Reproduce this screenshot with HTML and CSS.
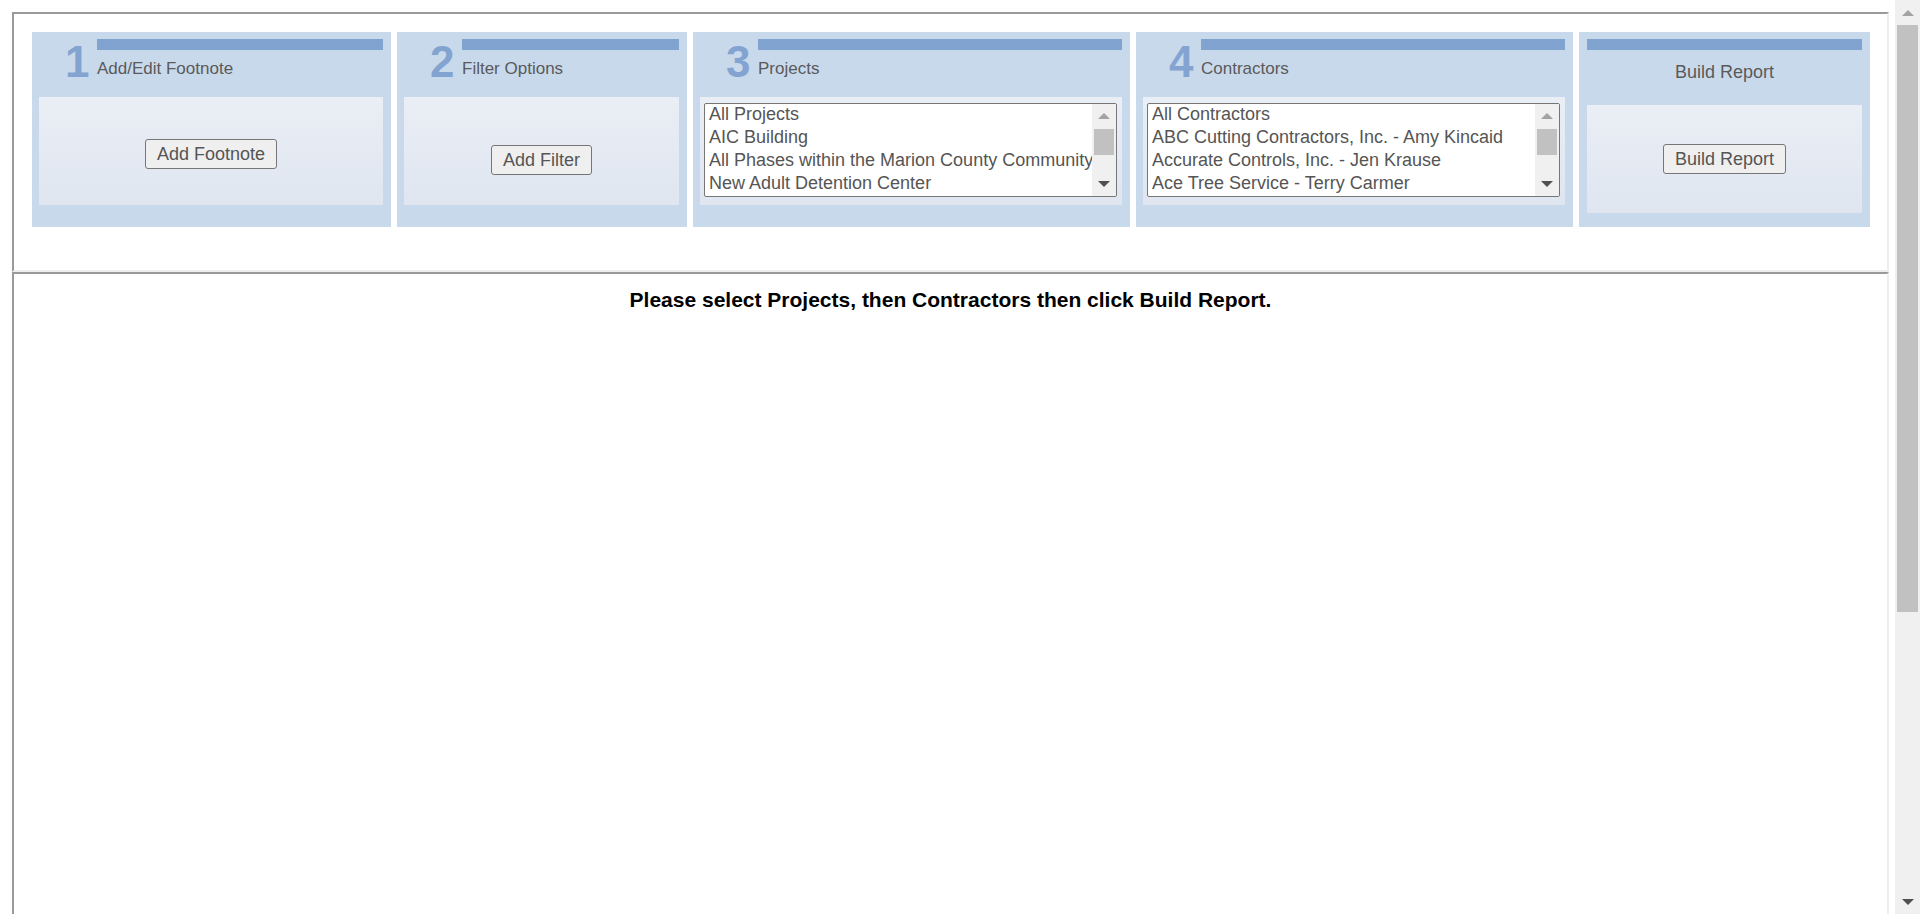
FILE: index.html
```html
<!DOCTYPE html>
<html>
<head>
<meta charset="utf-8">
<title>Report Builder</title>
<link rel="stylesheet" href="styles.css">
</head>
<body>
<div class="page">
  <div class="frame frame-top">
    <div class="steps">
      <div class="panel panel-w1">
        <div class="head">
          <div class="num">1</div>
          <div class="head-right">
            <div class="bar"></div>
            <div class="title">Add/Edit Footnote</div>
          </div>
        </div>
        <div class="well well-btn well-p1"><button class="btn">Add Footnote</button></div>
      </div>
      <div class="panel panel-w2">
        <div class="head">
          <div class="num">2</div>
          <div class="head-right">
            <div class="bar"></div>
            <div class="title">Filter Options</div>
          </div>
        </div>
        <div class="well well-btn well-p2"><button class="btn">Add Filter</button></div>
      </div>
      <div class="panel panel-w3">
        <div class="head">
          <div class="num">3</div>
          <div class="head-right">
            <div class="bar"></div>
            <div class="title">Projects</div>
          </div>
        </div>
        <div class="well well-list">
          <div class="listbox">
            <div class="options">
              <div class="opt">All Projects</div>
              <div class="opt">AIC Building</div>
              <div class="opt">All Phases within the Marion County Community</div>
              <div class="opt">New Adult Detention Center</div>
            </div>
            <div class="vscroll">
              <div class="arrow"><span class="tri-up"></span></div>
              <div class="thumb"></div>
              <div class="spacer"></div>
              <div class="arrow"><span class="tri-down"></span></div>
            </div>
          </div>
        </div>
      </div>
      <div class="panel panel-w3">
        <div class="head">
          <div class="num">4</div>
          <div class="head-right">
            <div class="bar"></div>
            <div class="title">Contractors</div>
          </div>
        </div>
        <div class="well well-list">
          <div class="listbox">
            <div class="options">
              <div class="opt">All Contractors</div>
              <div class="opt">ABC Cutting Contractors, Inc. - Amy Kincaid</div>
              <div class="opt">Accurate Controls, Inc. - Jen Krause</div>
              <div class="opt">Ace Tree Service - Terry Carmer</div>
            </div>
            <div class="vscroll">
              <div class="arrow"><span class="tri-up"></span></div>
              <div class="thumb"></div>
              <div class="spacer"></div>
              <div class="arrow"><span class="tri-down"></span></div>
            </div>
          </div>
        </div>
      </div>
      <div class="panel panel-w5">
        <div class="head-build">
          <div class="bar bar-build"></div>
          <div class="title title-build">Build Report</div>
        </div>
        <div class="well well-btn well-p5 well-build"><button class="btn">Build Report</button></div>
      </div>
    </div>
  </div>
  <div class="frame frame-bottom">
    <div class="message">Please select Projects, then Contractors then click Build Report.</div>
  </div>
</div>
<div class="page-scroll">
  <div class="p-arrow"><span class="p-tri-up"></span></div>
  <div class="p-thumb"></div>
  <div class="spacer"></div>
  <div class="p-arrow"><span class="p-tri-down"></span></div>
</div>
</body>
</html>
```
FILE: styles.css
```css
html, body {
  margin: 0;
  height: 914px;
  overflow: hidden;
  background: #ffffff;
}
body {
  display: flex;
  font-family: "Liberation Sans", Arial, sans-serif;
}
.page {
  flex: 1;
  min-width: 0;
  display: flex;
  flex-direction: column;
  padding: 12px 6px 0 12px;
}
.frame {
  box-sizing: border-box;
  border: 2px solid;
  border-color: #9a9a9a #eeeeee #eeeeee #9a9a9a;
  flex: none;
}
.frame-top {
  height: 260px;
  padding: 18px 0 0 18px;
}
.frame-bottom {
  height: 642px;
  border-bottom-width: 0;
}
.steps {
  display: flex;
  gap: 6px;
}
.panel {
  height: 195px;
  background: #c9d9ec;
  box-sizing: border-box;
  flex: none;
}
.panel-w1 { width: 359px; }
.panel-w2 { width: 290px; }
.panel-w3 { width: 437px; }
.panel-w5 { width: 291px; }
.head {
  height: 65px;
  display: flex;
}
.num {
  width: 65px;
  box-sizing: border-box;
  padding: 8px 0 0 33px;
  font-size: 44px;
  line-height: 44px;
  font-weight: bold;
  color: #83a4d0;
}
.head-right {
  flex: 1;
  padding: 7px 8px 0 0;
}
.bar {
  height: 11px;
  background: #81a3cf;
}
.title {
  margin-top: 9px;
  font-size: 17px;
  line-height: 20px;
  color: #5a5a5a;
  white-space: nowrap;
}
.head-build {
  height: 73px;
  padding-top: 7px;
  box-sizing: border-box;
}
.bar-build {
  margin: 0 8px;
}
.title-build {
  margin-top: 12px;
  font-size: 18px;
  text-align: center;
}
.well {
  height: 108px;
  margin: 0 8px 0 7px;
  box-sizing: border-box;
  background: linear-gradient(#eaeef5, #dfe6f0);
}
.well-build { margin: 0 8px; }
.well-btn { text-align: center; }
.well-p1 { padding-top: 42px; }
.well-p2 { padding-top: 48px; }
.well-p5 { padding-top: 39px; }
.btn {
  font-family: "Liberation Sans", Arial, sans-serif;
  font-size: 18px;
  line-height: 28px;
  height: 30px;
  padding: 0 11px;
  color: #555555;
  background: #efefef;
  border: 1px solid #767676;
  border-radius: 3px;
  margin: 0;
}
.well-list {
  padding: 6px 5px 0 4px;
}
.listbox {
  height: 94px;
  box-sizing: border-box;
  border: 1px solid #767676;
  border-radius: 2px;
  background: #ffffff;
  display: flex;
  overflow: hidden;
}
.options {
  flex: 1;
  min-width: 0;
  overflow: hidden;
  margin-top: -1px;
  padding-left: 4px;
}
.opt {
  font-size: 18px;
  line-height: 23px;
  color: #555555;
  white-space: nowrap;
}
.vscroll {
  width: 24px;
  flex: none;
  background: #f0f0f0;
  display: flex;
  flex-direction: column;
}
.arrow {
  height: 24px;
  display: flex;
  align-items: center;
  justify-content: center;
  flex: none;
}
.tri-up {
  width: 0;
  height: 0;
  border-left: 6px solid transparent;
  border-right: 6px solid transparent;
  border-bottom: 6px solid #a3a3a3;
}
.tri-down {
  width: 0;
  height: 0;
  border-left: 6px solid transparent;
  border-right: 6px solid transparent;
  border-top: 6px solid #505050;
}
.thumb {
  height: 26px;
  margin: 1px 2px 0;
  background: #c1c1c1;
  flex: none;
}
.spacer { flex: 1; }
.message {
  text-align: center;
  font-weight: bold;
  font-size: 21px;
  line-height: 24px;
  padding-top: 14px;
  color: #000000;
}
.page-scroll {
  width: 25px;
  flex: none;
  background: #f0f0f0;
  display: flex;
  flex-direction: column;
}
.p-arrow {
  height: 25px;
  flex: none;
  display: flex;
  align-items: center;
  justify-content: center;
}
.p-tri-up {
  width: 0;
  height: 0;
  border-left: 6px solid transparent;
  border-right: 6px solid transparent;
  border-bottom: 6px solid #a3a3a3;
}
.p-tri-down {
  width: 0;
  height: 0;
  border-left: 6px solid transparent;
  border-right: 6px solid transparent;
  border-top: 6px solid #505050;
}
.p-thumb {
  height: 587px;
  margin: 0 2px;
  background: #c1c1c1;
  flex: none;
}
```
